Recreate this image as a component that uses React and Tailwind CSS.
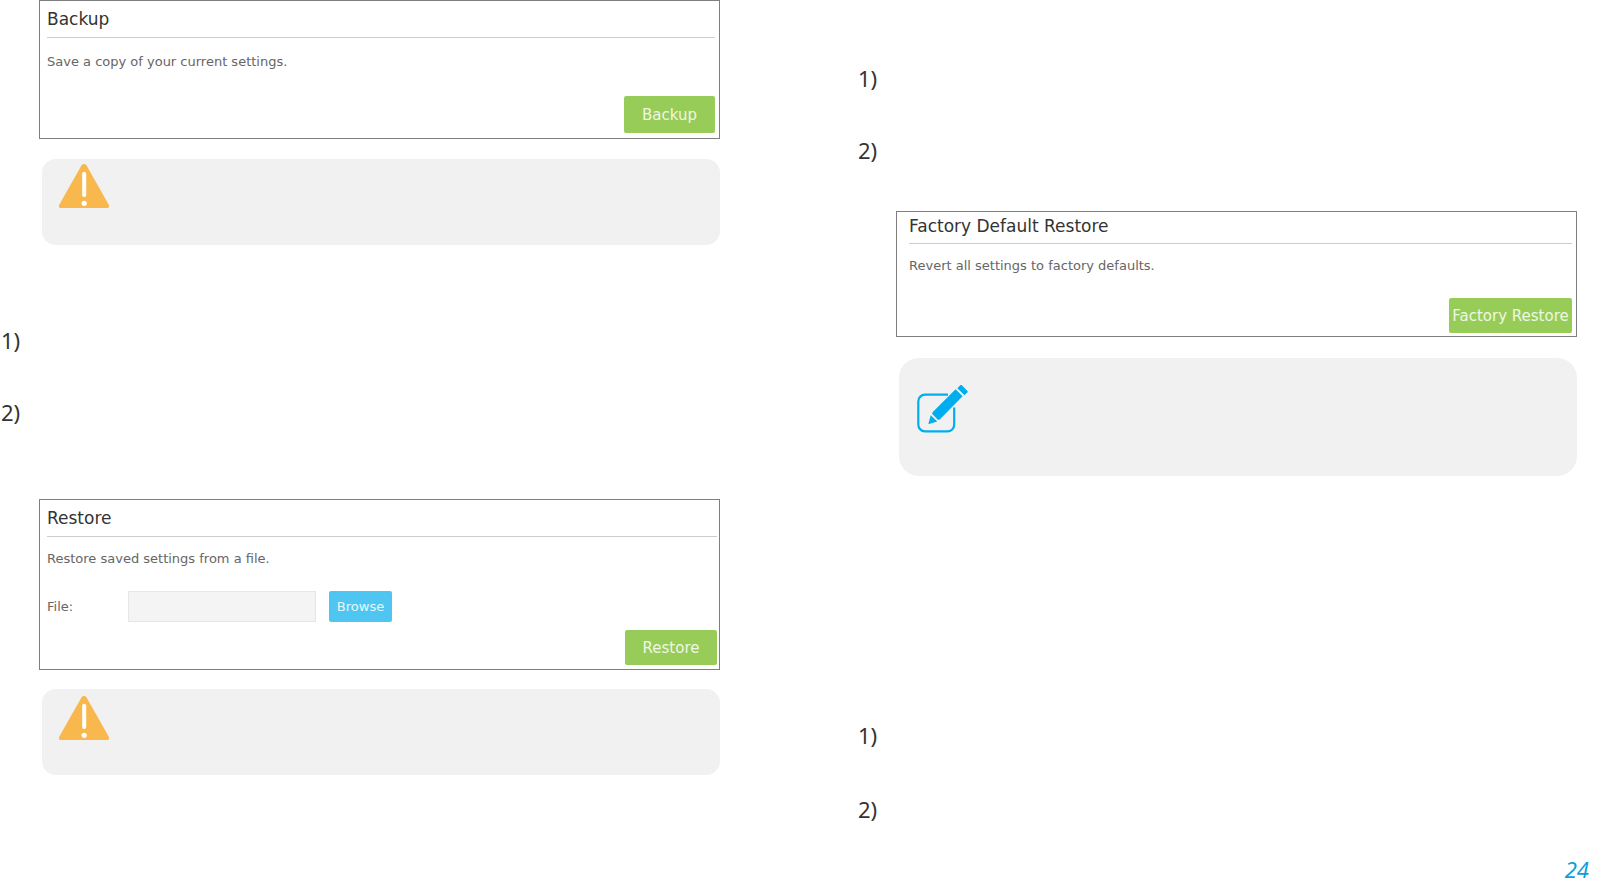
function WarningIcon() {
  return (
    <svg viewBox="0 0 50 44" className="w-[50px] h-11 shrink-0" aria-hidden="true">
      <path
        d="M22.4 1.6C23.6 -0.4 26.4 -0.4 27.6 1.6L49.6 40.4C50.6 42.2 49.8 44 48 44H2C0.2 44 -0.6 42.2 0.4 40.4Z"
        fill="#f8b84e"
      />
      <path d="M25.2 9.7V31" stroke="#fff" strokeWidth="4" strokeLinecap="round" />
      <circle cx="25.2" cy="39.3" r="2.6" fill="#fff" />
    </svg>
  );
}

function EditIcon() {
  return (
    <svg viewBox="0 0 51 48" className="w-[51px] h-12 shrink-0" fill="#00aeef" aria-hidden="true">
      <path
        d="M31 9.6H8A6.8 6.8 0 0 0 1.3 16.4V39.6A6.8 6.8 0 0 0 8 46.4H30.4A6.8 6.8 0 0 0 37.2 39.6V22.5"
        fill="none"
        stroke="#00aeef"
        strokeWidth="2.2"
      />
      <path d="M38.6 4.3L45.6 11.3L23 34.2C22.2 35 21.2 35 20.4 34.2L15.8 29.6C15 28.8 15 27.8 15.8 27Z" />
      <path d="M13.7 30.2L20.3 36.6L12 39C11.6 39.1 11.4 38.8 11.5 38.4Z" />
      <path d="M43 0.5C43.7 -0.1 44.5 -0.1 45.1 0.5L50.3 5.8C50.9 6.4 50.9 7 50.3 7.6L47.4 10.2L40.4 3.2Z" />
    </svg>
  );
}

function Steps({ className }) {
  return (
    <ol className={`flex flex-col pl-px text-[22px] leading-8 text-[#333] font-['Noto_Sans',sans-serif] ${className}`}>
      <li>1)</li>
      <li>2)</li>
    </ol>
  );
}

function App() {
  return (
    <div className="min-h-screen flex flex-col bg-white font-['DejaVu_Sans',Verdana,sans-serif] text-[13px] leading-5 text-[#666]">
      <main className="grid grid-cols-2 gap-[137px] pr-[23px]">

        <div>
          <section className="ml-[39px] border border-[#7f7f7f] pl-[7px] pr-1 pb-[5px]">
            <h2 className="text-[17px] leading-[36px] text-[#333] border-b border-[#ccc]">Backup</h2>
            <p className="mt-[14px]">Save a copy of your current settings.</p>
            <div className="mt-6 flex justify-end">
              <button type="button" className="w-[91px] h-[37px] rounded-[2px] bg-[#98cc59] text-[15px] text-[#eef7e3]">
                Backup
              </button>
            </div>
          </section>

          <aside className="ml-[42px] mt-5 h-[86px] rounded-[14px] bg-[#f1f1f1] pl-[17px] pt-[5px]">
            <WarningIcon />
          </aside>

          <Steps className="mt-[79px] gap-10" />

          <section className="ml-[39px] mt-[71px] border border-[#7f7f7f] pl-[7px] pr-[2px] pb-[4px]">
            <h2 className="text-[17px] leading-[36px] text-[#333] border-b border-[#ccc]">Restore</h2>
            <p className="mt-3">Restore saved settings from a file.</p>
            <div className="mt-[22px] flex items-end">
              <label htmlFor="file" className="w-[81px] self-center">File:</label>
              <input
                id="file"
                type="text"
                readOnly
                className="w-[188px] h-[31px] border border-[#e6e6e6] bg-[#f4f4f4] px-2"
              />
              <button type="button" className="ml-[13px] w-[63px] h-[31px] rounded-[2px] bg-[#4fc6f1] text-[#e6f7fd]">
                Browse
              </button>
            </div>
            <div className="mt-2 flex justify-end">
              <button type="button" className="w-[92px] h-[35px] rounded-[2px] bg-[#98cc59] text-[15px] text-[#eef7e3]">
                Restore
              </button>
            </div>
          </section>

          <aside className="ml-[42px] mt-[19px] h-[86px] rounded-[14px] bg-[#f1f1f1] pl-[17px] pt-[7px]">
            <WarningIcon />
          </aside>
        </div>

        <div className="pt-[62px]">
          <Steps className="gap-10" />

          <section className="ml-[39px] mt-[45px] border border-[#7f7f7f] pl-3 pr-1 pb-[3px]">
            <h2 className="pb-[3px] text-[17px] leading-[28px] text-[#333] border-b border-[#ccc]">Factory Default Restore</h2>
            <p className="mt-3">Revert all settings to factory defaults.</p>
            <div className="mt-[22px] flex justify-end">
              <button type="button" className="w-[123px] h-[35px] rounded-[2px] bg-[#98cc59] text-[15px] text-[#eef7e3]">
                Factory Restore
              </button>
            </div>
          </section>

          <aside className="ml-[42px] mt-[21px] h-[118px] rounded-[20px] bg-[#f1f1f1] pl-[18px] pt-[27px]">
            <EditIcon />
          </aside>

          <Steps className="mt-[243px] gap-[42px]" />
        </div>
      </main>

      <footer className="mt-auto pr-[11px] text-right text-[22px] leading-[30px] italic text-[#0c9fde] font-['Noto_Sans',sans-serif]">
        24
      </footer>
    </div>
  );
}

export default App;
